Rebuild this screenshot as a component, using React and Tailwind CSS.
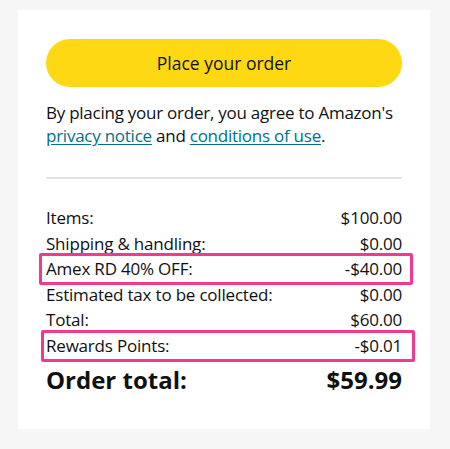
export default function App() {
  const rows = [
    { label: "Items:", value: "$100.00" },
    { label: "Shipping & handling:", value: "$0.00" },
    { label: "Amex RD 40% OFF:", value: "-$40.00", box: "a" },
    { label: "Estimated tax to be collected:", value: "$0.00" },
    { label: "Total:", value: "$60.00" },
    { label: "Rewards Points:", value: "-$0.01", box: "b" },
  ];
  return (
    <div
      className="w-[450px] h-[449px] bg-[#f6f6f6] pt-[10px] text-[#0f1111]"
      style={{ fontFamily: '"Open Sans", "Noto Sans", Arial, sans-serif' }}
    >
      <div className="ml-[18px] w-[412px] h-[419px] bg-white px-[28px] pt-[29px]">
        <button className="w-full h-[48px] rounded-full bg-[#ffd814] text-[17.5px] text-[#0f1111] flex items-center justify-center">
          Place your order
        </button>
        <p className="mt-[14px] text-[17px] leading-[23px] tracking-[-0.25px]">
          By placing your order, you agree to Amazon's{" "}
          <span className="text-[#007185] underline underline-offset-2">privacy notice</span> and{" "}
          <span className="text-[#007185] underline underline-offset-2">conditions of use</span>.
        </p>
        <div className="mt-[30px] h-[2px] bg-[#e3e3e3]" />
        <div className="mt-[26px] flex flex-col">
          {rows.map((r) => (
            <div
              key={r.label}
              className="relative flex justify-between h-[25.5px] items-center text-[17px] tracking-[-0.2px]"
            >
              {r.box === "a" && (
                <div className="absolute left-[-7px] right-[-11px] top-[-3px] bottom-[-3px] border-[3px] border-[#ef3a8e] rounded-[2px]" />
              )}
              {r.box === "b" && (
                <div className="absolute left-[-5px] right-[-13px] top-[-3px] bottom-[-4px] border-[3px] border-[#ef3a8e] rounded-[2px]" />
              )}
              <span>{r.label}</span>
              <span>{r.value}</span>
            </div>
          ))}
          <div className="flex justify-between items-center h-[36px] mt-[4px] text-[24px] font-bold">
            <span>Order total:</span>
            <span>$59.99</span>
          </div>
        </div>
      </div>
    </div>
  );
}
